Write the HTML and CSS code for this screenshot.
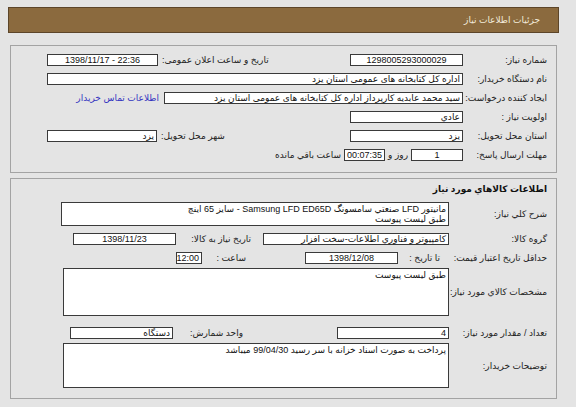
FILE: index.html
```html
<!DOCTYPE html>
<html lang="fa" dir="rtl">
<head>
<meta charset="utf-8">
<title>جزئیات اطلاعات نیاز</title>
<link rel="stylesheet" href="styles.css">
</head>
<body>
<div class="page">
  <div class="hdr"><span>جزئیات اطلاعات نیاز</span></div>

  <div class="panel p1">
    <div class="row">
      <div class="lbl">شماره نیاز:</div>
      <div class="box c w113">1298005293000029</div>
      <div class="sp"></div>
      <div class="lbl2">تاریخ و ساعت اعلان عمومی:</div>
      <div class="box c ltr w111">1398/11/17 - 22:36</div>
    </div>
    <div class="row">
      <div class="lbl">نام دستگاه خریدار:</div>
      <div class="box grow">اداره کل کتابخانه های عمومی استان یزد</div>
    </div>
    <div class="row">
      <div class="lbl">ایجاد کننده درخواست:</div>
      <div class="box w299">سید محمد عابدیه کارپرداز اداره کل کتابخانه های عمومی استان یزد</div>
      <a class="link" href="#">اطلاعات تماس خریدار</a>
      <div class="sp"></div>
    </div>
    <div class="row">
      <div class="lbl">اولویت نیاز :</div>
      <div class="box w113">عادي</div>
      <div class="sp"></div>
    </div>
    <div class="row">
      <div class="lbl">استان محل تحویل:</div>
      <div class="box w113">یزد</div>
      <div class="sp"></div>
      <div class="lbl2">شهر محل تحویل:</div>
      <div class="box w110">یزد</div>
    </div>
    <div class="row">
      <div class="lbl">مهلت ارسال پاسخ:</div>
      <div class="box c w52">1</div>
      <span class="txt">روز و</span>
      <div class="box c w41">00:07:35</div>
      <span class="txt">ساعت باقي مانده</span>
      <div class="sp"></div>
    </div>
  </div>

  <div class="panel p2">
    <div class="title">اطلاعات کالاهاي مورد نياز</div>
    <div class="row ra">
      <div class="lbl">شرح کلي نياز:</div>
      <div class="box area h24">مانيتور LFD صنعتي سامسونگ Samsung LFD ED65D - سايز 65 اينچ<br>طبق ليست پيوست</div>
    </div>
    <div class="row rb">
      <div class="lbl">گروه کالا:</div>
      <div class="box w186">کامپيوتر و فناوري اطلاعات-سخت افزار</div>
      <div class="sp"></div>
      <div class="lbl3 w75">تاريخ نياز به کالا:</div>
      <div class="box c w103">1398/11/23</div>
    </div>
    <div class="row rc">
      <div class="lbl">حداقل تاريخ اعتبار قيمت:</div>
      <div class="lbl3 w51 pr9">تا تاريخ :</div>
      <div class="box c w93">1398/12/08</div>
      <div class="sp"></div>
      <div class="lbl3 w44">ساعت :</div>
      <div class="box c w26">12:00</div>
    </div>
    <div class="row rd">
      <div class="lbl">مشخصات کالاي مورد نياز:</div>
      <div class="box area h48">طبق ليست پيوست</div>
    </div>
    <div class="row re">
      <div class="lbl">تعداد / مقدار مورد نياز:</div>
      <div class="box w112">4</div>
      <div class="sp"></div>
      <div class="lbl3 w70">واحد شمارش:</div>
      <div class="box w103">دستگاه</div>
    </div>
    <div class="row rf">
      <div class="lbl">توضيحات خريدار:</div>
      <div class="box area h45">پرداخت به صورت اسناد خزانه با سر رسيد 99/04/30 ميباشد</div>
    </div>
  </div>
</div>
</body>
</html>
```

FILE: styles.css
```css
html, body {
  margin: 0;
  padding: 0;
}
body {
  background: #e4e4e4;
  font-family: "Liberation Sans", "DejaVu Sans", sans-serif;
  font-size: 9px;
  color: #222;
}
.page {
  padding: 7px 17px 0 8px;
}
.hdr {
  height: 26px;
  box-sizing: border-box;
  background: #8b6a3e;
  border: 1px solid #5c4529;
  display: flex;
  align-items: center;
  padding-right: 18px;
  color: #f2eadb;
  font-size: 9px;
}
.panel {
  margin: 12px 2px 0;
  border: 1px solid #a3a3a3;
  display: flex;
  flex-direction: column;
}
.p1 {
  gap: 7px;
  padding: 8px 0 11px;
}
.p2 {
  margin-top: 5px;
  gap: 7px;
  padding: 5px 0 10px;
}
.row {
  display: flex;
  align-items: center;
  min-height: 12px;
}
.p1 .row {
  padding-left: 36px;
}
.lbl {
  flex: none;
  box-sizing: border-box;
  width: 93px;
  padding-right: 9px;
  white-space: nowrap;
}
.p2 .lbl {
  width: 107px;
}
.lbl2 {
  flex: none;
  margin-left: 4px;
  white-space: nowrap;
}
.lbl3 {
  flex: none;
  box-sizing: border-box;
  white-space: nowrap;
  text-align: right;
}
.pr9 { padding-right: 9px; }
.txt {
  flex: none;
  margin: 0 3px;
  white-space: nowrap;
}
.sp {
  flex: 1;
}
.box {
  flex: none;
  box-sizing: border-box;
  height: 12px;
  line-height: 10px;
  background: #fff;
  border: 1px solid #3a3a3a;
  padding: 0 2px;
  color: #111;
  white-space: nowrap;
  overflow: hidden;
  text-align: right;
}
.box.c { text-align: center; }
.ltr { direction: ltr; }
.grow { flex: 1; }
.area {
  flex: 1;
  white-space: normal;
  padding: 1px 2px;
}
.h24 { height: 24px; }
.h48 { height: 48px; }
.h45 { height: 45px; }
.w26 { width: 26px; }
.w41 { width: 41px; }
.w44 { width: 44px; }
.w51 { width: 51px; }
.w52 { width: 52px; }
.w70 { width: 70px; }
.w75 { width: 75px; }
.w93 { width: 93px; }
.w103 { width: 103px; }
.w110 { width: 110px; }
.w111 { width: 111px; }
.w112 { width: 112px; }
.w113 { width: 113px; }
.w186 { width: 186px; }
.w299 { width: 299px; }
.link {
  flex: none;
  margin-right: 5px;
  color: #3434c0;
  text-decoration: none;
  white-space: nowrap;
}
.title {
  padding-right: 9px;
  font-weight: bold;
  font-size: 9px;
  line-height: 11px;
  color: #111;
}
.ra { padding-left: 50px; }
.rb { padding-left: 62px; }
.rc { padding-left: 165px; }
.rd { padding-left: 52px; margin-top: -3px; }
.re { padding-left: 59px; margin-top: 4px; }
.rf { padding-left: 52px; margin-top: -3px; }
```
